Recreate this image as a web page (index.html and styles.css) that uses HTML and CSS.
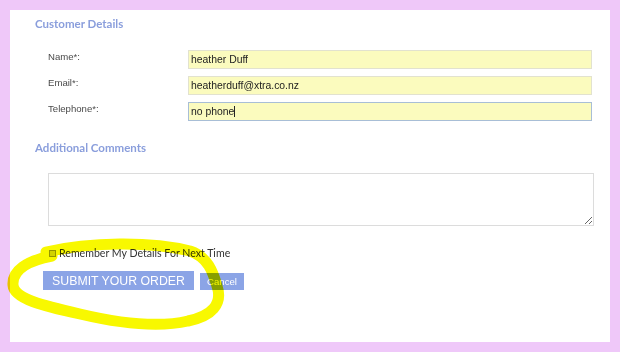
FILE: index.html
```html
<!DOCTYPE html>
<html>
<head>
<meta charset="utf-8">
<link rel="stylesheet" href="styles.css">
</head>
<body>
<div class="panel">
  <h2 class="section-title">Customer Details</h2>
  <div class="fields">
    <label class="field-label">Name*:</label>
    <input class="field-input" type="text" value="heather Duff">
    <label class="field-label">Email*:</label>
    <input class="field-input" type="text" value="heatherduff@xtra.co.nz">
    <label class="field-label">Telephone*:</label>
    <div class="field-input focused">no phone<span class="caret"></span></div>
  </div>
  <h2 class="section-title second">Additional Comments</h2>
  <textarea class="comments"></textarea>
  <div class="remember">
    <span class="check"></span>
    <span class="remember-text">Remember My Details For Next Time</span>
  </div>
  <div class="actions">
    <button class="btn submit">SUBMIT YOUR ORDER</button>
    <button class="btn cancel">Cancel</button>
  </div>
</div>
<svg class="scribble" width="620" height="352" viewBox="0 0 620 352">
  <path d="M 46 252 C 90 242, 150 241, 190 251 C 208 257, 213 272, 217 286 C 223 304, 212 316, 188 321 C 158 328, 118 323, 80 314 C 44 306, 14 299, 13 285 C 12 271, 26 261, 52 256"
        fill="none" stroke="#f8f800" stroke-width="11" stroke-linecap="round" stroke-linejoin="round"/>
</svg>
</body>
</html>
```
FILE: styles.css
```css
html, body {
  margin: 0;
  padding: 0;
}
body {
  background: #efc8f9;
  width: 620px;
  height: 352px;
  padding: 10px;
  box-sizing: border-box;
  position: relative;
  overflow: hidden;
  font-family: "Liberation Sans", Arial, sans-serif;
}
.panel {
  background: #ffffff;
  width: 600px;
  height: 332px;
  padding: 6px 0 0 25px;
  box-sizing: border-box;
}
.section-title {
  margin: 0;
  font-family: Lato, "Open Sans", sans-serif;
  font-weight: 700;
  font-size: 11.5px;
  line-height: 16px;
  color: #8a9edc;
}
.section-title.second {
  margin-top: 19px;
}
.fields {
  margin: 18px 0 0 13px;
  display: grid;
  grid-template-columns: 140px 404px;
  row-gap: 7px;
}
.field-label {
  font-size: 9.6px;
  line-height: 14px;
  color: #4a4a4a;
}
.field-input {
  height: 19px;
  box-sizing: border-box;
  border: 1px solid #e2e2cf;
  background: #fbfbbe;
  font-family: "Liberation Sans", Arial, sans-serif;
  font-size: 10.4px;
  color: #222;
  padding: 0 2px;
  margin: 0;
  outline: none;
}
.field-input.focused {
  border-color: #a8bed6;
  line-height: 17px;
  display: flex;
  align-items: center;
}
.caret {
  display: inline-block;
  width: 1px;
  height: 11px;
  background: #222;
}
.comments {
  display: block;
  margin: 17px 0 0 13px;
  width: 546px;
  height: 53px;
  box-sizing: border-box;
  border: 1px solid #dcdcdc;
  background: #fff;
  padding: 2px;
}
.remember {
  margin: 20px 0 0 14px;
  display: flex;
  align-items: center;
  height: 14px;
}
.check {
  width: 5px;
  height: 5px;
  border: 1px solid #9a9a9a;
  background: #d8d8d8;
  margin-right: 3px;
}
.remember-text {
  font-family: Lato, "Open Sans", sans-serif;
  font-size: 10.6px;
  color: #333;
}
.actions {
  margin: 11px 0 0 8px;
  display: flex;
  align-items: flex-end;
  gap: 6px;
}
.btn {
  border: none;
  margin: 0;
  background: #8ba4e6;
  color: #fff;
  font-family: "Liberation Sans", Arial, sans-serif;
  padding: 0;
}
.submit {
  width: 151px;
  height: 19px;
  font-size: 12.3px;
}
.cancel {
  width: 44px;
  height: 17px;
  font-size: 9.6px;
}
.scribble {
  position: absolute;
  left: 0;
  top: 0;
  pointer-events: none;
  mix-blend-mode: multiply;
}
```
